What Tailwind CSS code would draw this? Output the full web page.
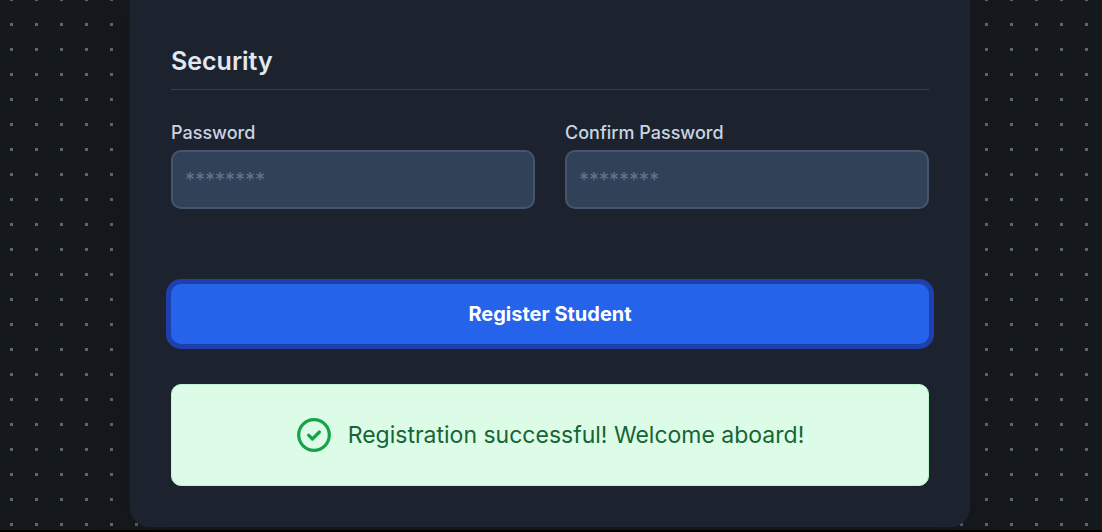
<!DOCTYPE html>
<html lang="en">
<head>
<meta charset="utf-8">
<meta name="viewport" content="width=device-width, initial-scale=1">
<title>Student Registration</title>
<script src="https://cdn.jsdelivr.net/npm/@tailwindcss/browser@4"></script>
</head>
<body class="bg-black font-['Inter',sans-serif]">
<main class="bg-[#15191d] bg-[conic-gradient(from_270deg_at_3px_3px,#5b6778_25%,transparent_0)] bg-[size:25px_25px] bg-[position:10px_-2px] pr-[18px] pb-[3px] pl-4">
  <form class="mx-auto max-w-[840px] rounded-b-[20px] border border-t-0 border-[#1d2631] bg-[#1c232f] px-10 pt-[45px] pb-10 shadow-[0_0_30px_rgba(20,18,22,0.5)]">
    <h2 class="border-b border-[#334155] pb-[11px] text-[25px] leading-[33px] font-semibold text-slate-200">Security</h2>
    <div class="mt-[31px] grid grid-cols-2 gap-[30px]">
      <div class="flex flex-col gap-[5px]">
        <label for="password" class="text-lg leading-6 font-medium text-slate-300">Password</label>
        <input id="password" type="password" placeholder="********" class="h-[59px] w-full rounded-[10px] border-2 border-slate-600 bg-slate-700 px-3 text-xl text-slate-200 placeholder:text-slate-500">
      </div>
      <div class="flex flex-col gap-[5px]">
        <label for="confirm" class="text-lg leading-6 font-medium text-slate-300">Confirm Password</label>
        <input id="confirm" type="password" placeholder="********" class="h-[59px] w-full rounded-[10px] border-2 border-slate-600 bg-slate-700 px-3 text-xl text-slate-200 placeholder:text-slate-500">
      </div>
    </div>
    <button type="submit" class="mt-[75px] block h-15 w-full rounded-[10px] bg-[#2563eb] text-xl font-bold text-white ring-5 ring-[#1e40af]">Register Student</button>
    <div role="status" class="mt-10 flex h-[102px] items-center justify-center gap-4 rounded-[10px] border border-[#bbf7d0] bg-[#dcfce7] text-[23px] text-[#166534]">
      <svg class="size-9 shrink-0 text-[#16a34a]" viewBox="0 0 36 36" fill="none" stroke="currentColor" stroke-width="3.2" stroke-linecap="round" stroke-linejoin="round" aria-hidden="true"><circle cx="18" cy="18" r="15.3"/><path d="m12.6 18.2 3.8 3.8 7-7"/></svg>
      <p>Registration successful! Welcome aboard!</p>
    </div>
  </form>
</main>
</body>
</html>
